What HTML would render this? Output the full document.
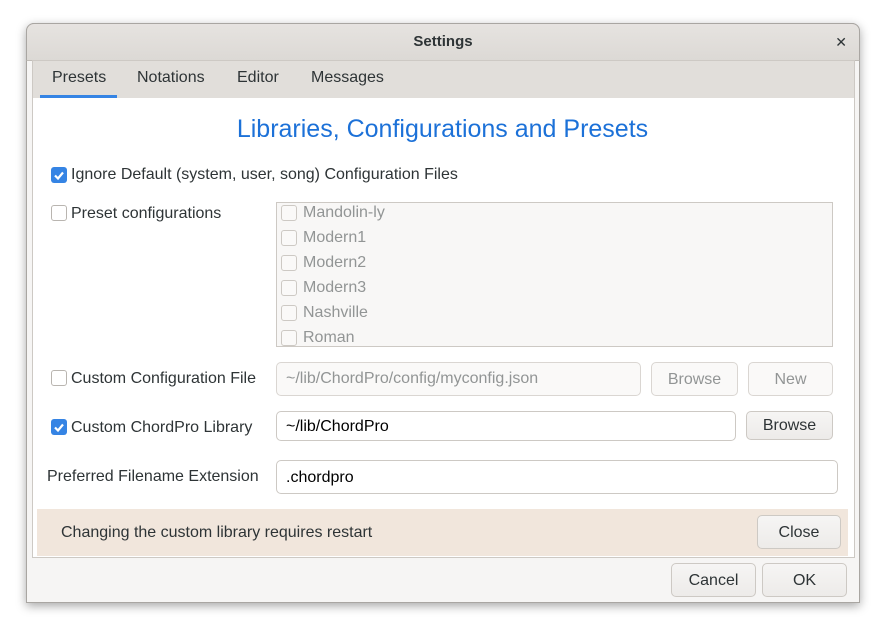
<!DOCTYPE html>
<html><head><style>
body{margin:0;width:885px;height:631px;background:#fff;font-family:"Liberation Sans","DejaVu Sans",sans-serif;font-size:16px;color:#2e3436;position:relative;overflow:hidden}
.a{position:absolute}
.win{left:26px;top:23px;width:832px;height:578px;background:#f6f5f4;border:1px solid #a9a6a2;border-radius:8px 8px 0 0;box-shadow:0 3px 10px rgba(0,0,0,.35)}
.title{left:26px;top:23px;width:832px;height:36px;background:linear-gradient(#e6e3e0,#dcd9d5);border-radius:8px 8px 0 0;border:1px solid #a9a6a2;border-bottom:1px solid #c0bcb7;text-align:center;line-height:36px;font-weight:bold;font-size:15px}
.tabs{left:32px;top:60px;width:821px;height:37px;background:#e1deda;border:1px solid #cdc9c4;border-bottom:1px solid #cdc9c4}
.content{left:32px;top:98px;width:821px;height:459px;background:#fff;border-left:1px solid #cdc9c4;border-right:1px solid #cdc9c4;border-bottom:1px solid #cdc9c4}
.cb{width:14px;height:14px;border:1px solid #b9b5b0;border-radius:3px;background:#fff}
.cbd{border-color:#cdc9c4;background:#faf9f8}
.cbon{width:16px;height:16px;border-radius:3px;background:#3584e4}
.entry{border:1px solid #cdc9c4;border-radius:5px;background:#fff;box-sizing:border-box;padding-left:9px;line-height:32px}
.btn{border:1px solid #cdc9c4;border-radius:5px;background:linear-gradient(#f6f5f4,#edebe9);box-sizing:border-box;text-align:center;line-height:30px}
.dis{background:#faf9f8;color:#929595;border-color:#dad6d2}
.gray{color:#929595}
</style></head><body>
<div class="a win"></div>
<div class="a title">Settings<span class="a" style="right:12px;top:0;font-size:14px">✕</span></div>
<div class="a tabs"></div>
<div class="a" style="left:52px;top:69px">Presets</div>
<div class="a" style="left:40px;top:95px;width:77px;height:3px;background:#3584e4"></div>
<div class="a" style="left:137px;top:69px">Notations</div>
<div class="a" style="left:237px;top:69px">Editor</div>
<div class="a" style="left:311px;top:69px">Messages</div>
<div class="a content"></div>
<div class="a" style="left:0;width:885px;top:115px;text-align:center;font-size:25px;color:#1c71d8">Libraries, Configurations and Presets</div>

<div class="a cbon" style="left:51px;top:167px"><svg width="16" height="16"><path d="M4 8.5l3 3 5-6" stroke="#fff" stroke-width="2.2" fill="none"/></svg></div>
<div class="a" style="left:71px;top:166px">Ignore Default (system, user, song) Configuration Files</div>

<div class="a cb" style="left:51px;top:205px"></div>
<div class="a" style="left:71px;top:205px">Preset configurations</div>
<div class="a" style="left:276px;top:202px;width:555px;height:143px;border:1px solid #cdc9c4;background:#f8f7f6;overflow:hidden"></div>
<div class="a cb cbd" style="left:281px;top:205px"></div><div class="a gray" style="left:303px;top:204px">Mandolin-ly</div>
<div class="a cb cbd" style="left:281px;top:230px"></div><div class="a gray" style="left:303px;top:229px">Modern1</div>
<div class="a cb cbd" style="left:281px;top:255px"></div><div class="a gray" style="left:303px;top:254px">Modern2</div>
<div class="a cb cbd" style="left:281px;top:280px"></div><div class="a gray" style="left:303px;top:279px">Modern3</div>
<div class="a cb cbd" style="left:281px;top:305px"></div><div class="a gray" style="left:303px;top:304px">Nashville</div>
<div class="a cb cbd" style="left:281px;top:330px"></div><div class="a gray" style="left:303px;top:329px">Roman</div>

<div class="a cb" style="left:51px;top:370px"></div>
<div class="a" style="left:71px;top:370px">Custom Configuration File</div>
<div class="a entry dis" style="left:276px;top:362px;width:365px;height:34px">~/lib/ChordPro/config/myconfig.json</div>
<div class="a btn dis" style="left:651px;top:362px;width:87px;height:34px;line-height:33px">Browse</div>
<div class="a btn dis" style="left:748px;top:362px;width:85px;height:34px;line-height:33px">New</div>

<div class="a cbon" style="left:51px;top:419px"><svg width="16" height="16"><path d="M4 8.5l3 3 5-6" stroke="#fff" stroke-width="2.2" fill="none"/></svg></div>
<div class="a" style="left:71px;top:419px">Custom ChordPro Library</div>
<div class="a entry" style="left:276px;top:411px;width:460px;height:30px;line-height:29px;color:#000">~/lib/ChordPro</div>
<div class="a btn" style="left:746px;top:411px;width:87px;height:29px;line-height:28px">Browse</div>

<div class="a" style="left:47px;top:468px">Preferred Filename Extension</div>
<div class="a entry" style="left:276px;top:460px;width:562px;height:34px;line-height:33px;color:#000">.chordpro</div>

<div class="a" style="left:37px;top:509px;width:811px;height:47px;background:#f1e6dc"></div>
<div class="a" style="left:61px;top:524px">Changing the custom library requires restart</div>
<div class="a btn" style="left:757px;top:515px;width:84px;height:34px;line-height:33px">Close</div>

<div class="a btn" style="left:671px;top:563px;width:85px;height:34px;line-height:33px">Cancel</div>
<div class="a btn" style="left:762px;top:563px;width:85px;height:34px;line-height:33px">OK</div>
</body></html>
